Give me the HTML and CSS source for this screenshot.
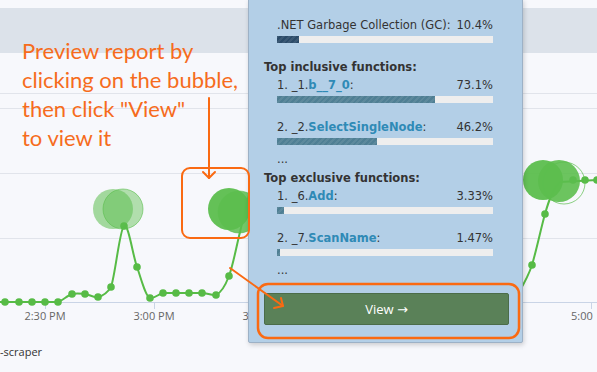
FILE: index.html
```html
<!DOCTYPE html>
<html lang="en">
<head>
  <meta charset="UTF-8">
  <meta name="viewport" content="width=device-width, initial-scale=1.0">
  <title>Report Preview</title>
  <link rel="stylesheet" href="styles.css">
</head>
<body>

  <div class="stage">

    <!-- Chart canvas -->
    <svg class="chart" width="597" height="372" viewBox="0 0 597 372">
      <rect x="0" y="8" width="597" height="45" fill="#dce2ea"/>

      <g stroke="#e1e4eb" stroke-width="1">
        <line x1="0" y1="93.5" x2="597" y2="93.5"/>
        <line x1="0" y1="108.5" x2="597" y2="108.5"/>
        <line x1="0" y1="173.5" x2="597" y2="173.5"/>
        <line x1="0" y1="238.5" x2="597" y2="238.5"/>
      </g>

      <g stroke="#c9d4e6" stroke-width="1">
        <line x1="0" y1="302.5" x2="597" y2="302.5"/>
        <line x1="45.5" y1="302" x2="45.5" y2="309"/>
        <line x1="154.5" y1="302" x2="154.5" y2="309"/>
        <line x1="263.5" y1="302" x2="263.5" y2="309"/>
        <line x1="591.5" y1="302" x2="591.5" y2="309"/>
      </g>

      <g class="axis-label" text-anchor="middle">
        <text x="45" y="320">2:30 PM</text>
        <text x="154" y="320">3:00 PM</text>
        <text x="263" y="320">3:30 PM</text>
      </g>
      <text class="axis-label" x="571" y="320">5:00</text>

      <text class="legend" x="0" y="356">-scraper</text>

      <!-- series -->
      <path d="M0 302 L58 302 C62.5 300.7 67.5 295.3 72 294 C76.5 292.7 80.7 293.5 85 294 C89.3 294.5 93.7 298 98 297 C102.3 296 106.7 294 111 287 C115.3 275 119.7 229.3 124 226 C128.3 222.7 132.7 255 137 267 C141.3 279 145.7 297 150 298 C154.3 299 158.7 293.8 163 293 L202 293 C207 293 211 295.5 216 295 C220.5 293 225 286.5 229 276 C233 265.5 236.8 244.7 240 232 C243.2 219.3 246 205 249 195"
            fill="none" stroke="#57bb46" stroke-width="2"/>
      <path d="M519 292 C525 282 529 274 532 265 C537 248 541 228 545 214 C549 200 553 188 560 182 L597 180"
            fill="none" stroke="#57bb46" stroke-width="2"/>

      <g fill="#57bb46">
        <circle cx="5" cy="302" r="3.8"/>
        <circle cx="19" cy="302" r="3.8"/>
        <circle cx="32" cy="302" r="3.8"/>
        <circle cx="45" cy="302" r="3.8"/>
        <circle cx="58" cy="302" r="3.8"/>
        <circle cx="72" cy="294" r="3.8"/>
        <circle cx="85" cy="294" r="3.8"/>
        <circle cx="98" cy="297" r="3.8"/>
        <circle cx="111" cy="287" r="3.8"/>
        <circle cx="124" cy="226" r="3.8"/>
        <circle cx="137" cy="267" r="3.8"/>
        <circle cx="150" cy="298" r="3.8"/>
        <circle cx="163" cy="293" r="3.8"/>
        <circle cx="176" cy="293" r="3.8"/>
        <circle cx="189" cy="293" r="3.8"/>
        <circle cx="202" cy="293" r="3.8"/>
        <circle cx="216" cy="295" r="3.8"/>
        <circle cx="229" cy="276" r="3.8"/>
        <circle cx="532" cy="265" r="3.8"/>
        <circle cx="545" cy="214" r="3.8"/>
        <circle cx="573" cy="180" r="3.8"/>
        <circle cx="585" cy="180" r="3.8"/>
        <circle cx="597" cy="180" r="3.8"/>
      </g>

      <!-- bubbles -->
      <circle cx="113" cy="209" r="20" fill="#5cbe4e" fill-opacity="0.55"/>
      <circle cx="123" cy="209" r="20" fill="#5cbe4e" fill-opacity="0.45" stroke="#5cbe4e" stroke-opacity="0.6"/>

      <circle cx="239" cy="212" r="21" fill="#5cbe4e" fill-opacity="0.85" stroke="#5cbe4e" stroke-opacity="0.6"/>
      <circle cx="229" cy="209" r="21" fill="#5cbe4e" fill-opacity="0.95"/>

      <circle cx="543" cy="180" r="20" fill="#5cbe4e" fill-opacity="0.95"/>
      <circle cx="564" cy="183" r="21" fill="none" stroke="#5cbe4e" stroke-opacity="0.7"/>
      <circle cx="559" cy="181" r="21" fill="#5cbe4e" fill-opacity="0.9"/>
    </svg>

    <!-- Annotation text -->
    <div class="note">Preview report by<br>clicking on the bubble,<br>then click "View"<br>to view it</div>

    <!-- Report tooltip -->
    <div class="tooltip">
      <div class="gc">
        <div class="row"><span>.NET Garbage Collection (GC):</span><span>10.4%</span></div>
        <div class="bar"><div class="fill dark" style="width: 10.4%"></div></div>
      </div>

      <div class="heading">Top inclusive functions:</div>
      <div class="fn">
        <div class="row"><span>1. _1.<b>b__7_0</b>:</span><span>73.1%</span></div>
        <div class="bar"><div class="fill" style="width: 73.1%"></div></div>
      </div>
      <div class="fn">
        <div class="row"><span>2. _2.<b>SelectSingleNode</b>:</span><span>46.2%</span></div>
        <div class="bar"><div class="fill" style="width: 46.2%"></div></div>
      </div>
      <div class="more">...</div>

      <div class="heading">Top exclusive functions:</div>
      <div class="fn">
        <div class="row"><span>1. _6.<b>Add</b>:</span><span>3.33%</span></div>
        <div class="bar"><div class="fill" style="width: 3.33%"></div></div>
      </div>
      <div class="fn">
        <div class="row"><span>2. _7.<b>ScanName</b>:</span><span>1.47%</span></div>
        <div class="bar"><div class="fill" style="width: 1.47%"></div></div>
      </div>
      <div class="more">...</div>

      <button class="view-btn">View <span class="arrow">&rarr;</span></button>
    </div>

    <!-- Annotation marks -->
    <svg class="marks" width="597" height="372" viewBox="0 0 597 372">
      <g fill="none" stroke="#fa6a12" stroke-width="2" stroke-linecap="round" stroke-linejoin="round">
        <line x1="209" y1="98" x2="209" y2="178"/>
        <polyline points="203,172 209,178 215,172"/>
        <rect x="182" y="168" width="67" height="70" rx="8"/>
        <line x1="230" y1="268" x2="283" y2="306"/>
        <polyline points="274,308 283,306 281,298"/>
        <rect x="258" y="284" width="261" height="54" rx="10" stroke-width="2.5"/>
      </g>
    </svg>

  </div>

</body>
</html>
```

FILE: styles.css
```css
/* General Styles */
body {
  margin: 0;
  background-color: #f7f8fc;
  font-family: 'Open Sans', 'DejaVu Sans', sans-serif;
}

.stage {
  position: relative;
  width: 597px;
  height: 372px;
  overflow: hidden;
}

.chart {
  display: block;
}

.axis-label {
  font-family: 'Open Sans', sans-serif;
  font-size: 11px;
  fill: #666;
}

.legend {
  font-family: 'Open Sans', sans-serif;
  font-size: 11px;
  fill: #333;
}

/* Annotation */
.note {
  position: absolute;
  left: 22px;
  top: 36px;
  font-family: Lato, 'Liberation Sans', sans-serif;
  font-size: 22px;
  line-height: 29px;
  color: #f66c1c;
}

.marks {
  position: absolute;
  left: 0;
  top: 0;
}

/* Tooltip */
.tooltip {
  position: absolute;
  left: 248px;
  top: -1px;
  width: 243px;
  height: 326px;
  padding: 16px 15px 0 15px;
  background-color: #b3cfe7;
  border: 1px solid #9db1c6;
  border-radius: 0 0 2px 2px;
  box-shadow: 1px 2px 5px rgba(0, 0, 0, 0.18);
  font-family: 'DejaVu Sans', Verdana, sans-serif;
  font-size: 11.5px;
  line-height: 18px;
  color: #333;
}

.row {
  display: flex;
  justify-content: space-between;
}

.row b {
  color: #2f8ab6;
}

.gc,
.fn {
  margin-left: 13px;
  margin-right: 14px;
}

.gc {
  margin-bottom: 15px;
}

.fn {
  margin-bottom: 15px;
}

.fn + .more {
  margin-top: -10px;
}

.bar {
  height: 7px;
  margin-top: 2px;
  background-color: #eeeeee;
}

.fill {
  height: 100%;
  background-color: #4f7f94;
  background-image: repeating-linear-gradient(135deg, rgba(255, 255, 255, 0.08) 0 2px, transparent 2px 4px);
}

.fill.dark {
  background-color: #2b4b69;
}

.heading {
  font-weight: bold;
}

.more {
  margin-left: 13px;
  margin-bottom: 1px;
}

.view-btn {
  display: block;
  width: 245px;
  height: 32px;
  margin-top: 14px;
  background-color: #5a8158;
  border: 1px solid #4b6c49;
  border-radius: 2px;
  color: #fff;
  font-family: 'Open Sans', sans-serif;
  font-size: 13px;
  cursor: pointer;
}

.view-btn .arrow {
  font-family: 'DejaVu Sans', sans-serif;
  font-size: 13px;
}
```
